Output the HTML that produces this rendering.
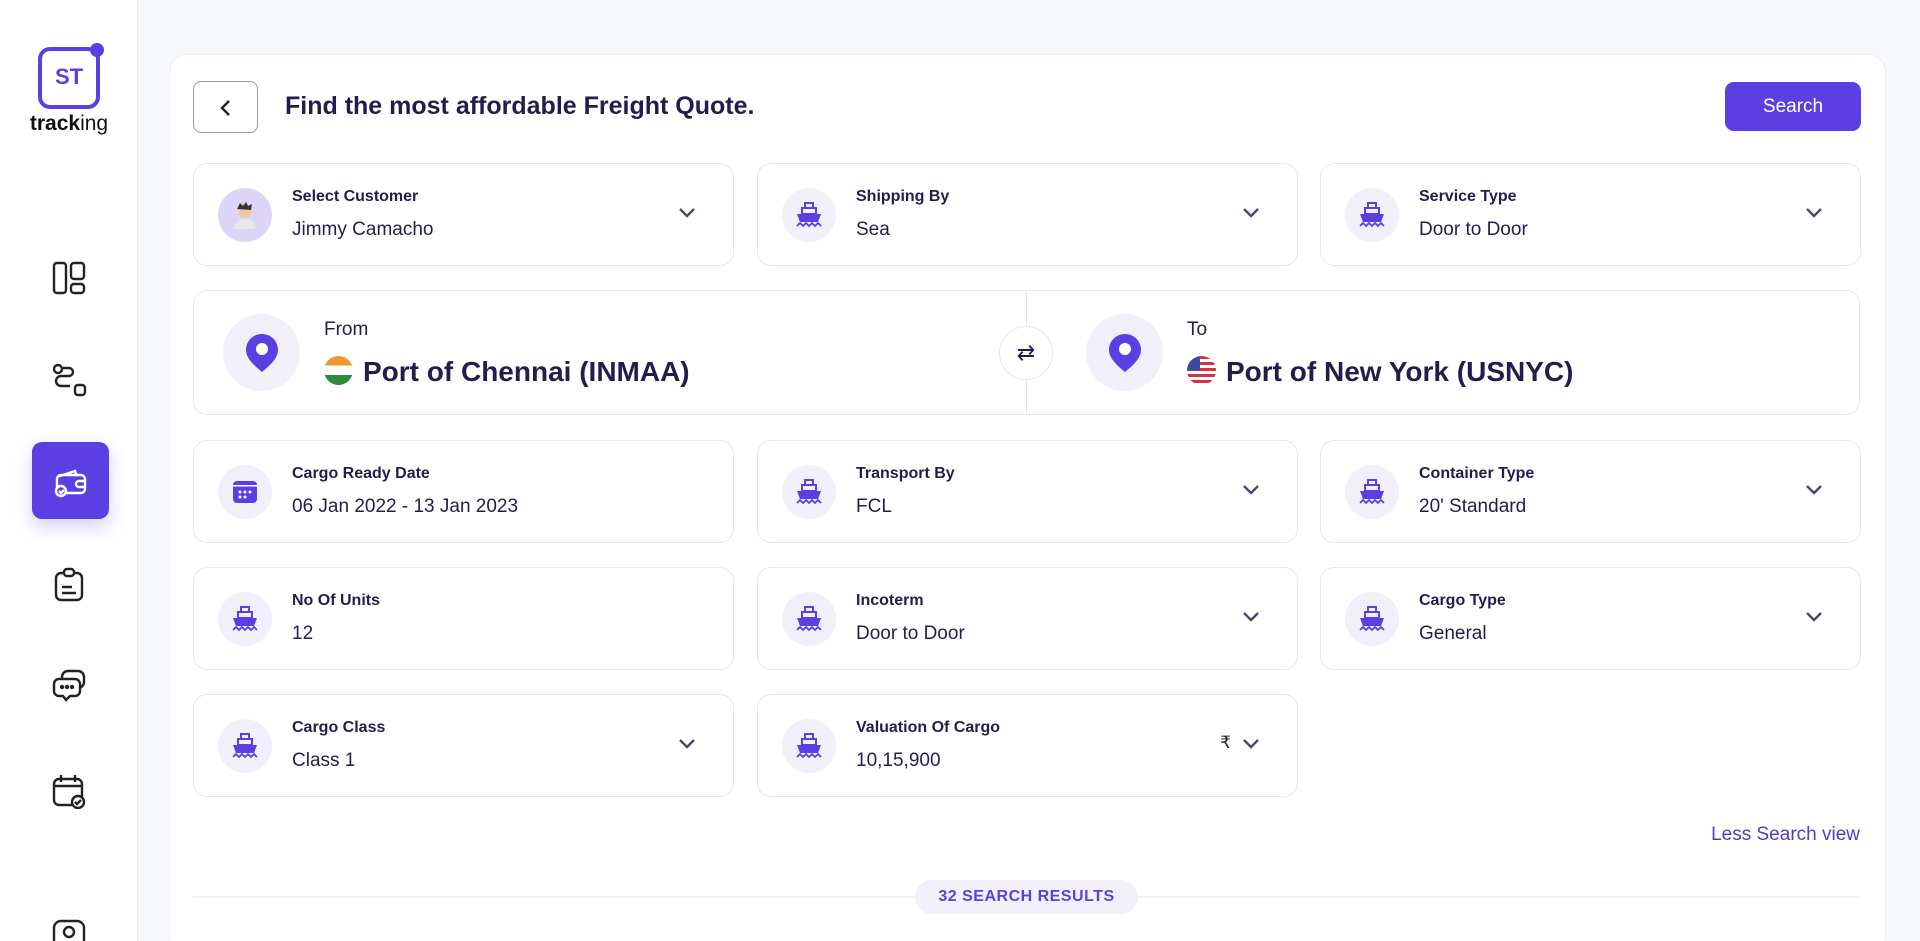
<!DOCTYPE html>
<html><head><meta charset="utf-8"><style>
*{box-sizing:border-box;margin:0;padding:0}
html,body{width:1920px;height:941px;overflow:hidden}
body{background:#f7f8fb;font-family:"Liberation Sans",sans-serif;color:#231d4d;position:relative}
.side{position:absolute;left:0;top:0;width:138px;height:941px;background:#fff;border-right:1px solid #eceef3}
.logo{position:absolute;left:38px;top:47px;width:62px;height:62px;border:4px solid #5b3fe3;border-radius:12px;color:#5b3fe3;font-weight:700;font-size:22px;text-align:center;line-height:52px}
.logo:after{content:"";position:absolute;right:-8px;top:-8px;width:14px;height:14px;border-radius:50%;background:#5b3fe3}
.trk{position:absolute;left:0;width:138px;top:112px;text-align:center;font-size:21px;color:#111;font-weight:700}
.si{position:absolute;left:51px;width:36px;height:36px}
.act{position:absolute;left:32px;top:442px;width:77px;height:77px;border-radius:10px;background:#5b3fe3;box-shadow:0 8px 18px rgba(91,63,227,.25)}
.card{position:absolute;left:169px;top:54px;width:1717px;height:900px;background:#fff;border:1px solid #eceef3;border-radius:18px}
.back{position:absolute;left:193px;top:81px;width:65px;height:52px;border:1.5px solid #9a9aa6;border-radius:8px;background:#fff}
.title{position:absolute;left:285px;top:92px;font-size:25px;font-weight:700;color:#231d4d}
.btn{position:absolute;left:1725px;top:82px;width:136px;height:49px;border-radius:9px;background:#5b3fe3;color:#fff;font-size:19px;text-align:center;line-height:49px}
.f{position:absolute;width:541px;height:103px;border:1px solid #e6e7ec;border-radius:14px;background:#fff}
.ic{position:absolute;left:24px;top:24px;width:54px;height:54px;border-radius:50%;background:#f1f0fa}
.ic svg{position:absolute;left:13px;top:13px}
.lb{position:absolute;left:98px;top:24px;font-size:16px;font-weight:700;color:#231d4d}
.vl{position:absolute;left:98px;top:55px;font-size:19px;color:#231d4d}
.chev{position:absolute;right:36px;top:42px}
.ft{position:absolute;left:193px;top:290px;width:1667px;height:125px;border:1px solid #e6e7ec;border-radius:14px;background:#fff}
.pin{position:absolute;top:23px;width:77px;height:77px;border-radius:50%;background:#f1f0fa}
.pin svg{position:absolute;left:22px;top:19px}
.fl{position:absolute;top:28px;font-size:19px}
.port{position:absolute;top:65px;font-size:28px;font-weight:700;white-space:nowrap}
.flag{display:inline-block;width:29px;height:29px;border-radius:50%;vertical-align:-4px;margin-right:10px;overflow:hidden}
.sw{position:absolute;left:805px;top:35px;width:54px;height:54px;border-radius:50%;border:1px solid #e6e7ec;background:#fff;text-align:center;line-height:52px;font-size:22px}
.div{position:absolute;left:832px;top:0;width:1px;height:123px;background:#e6e7ec}
.less{position:absolute;right:60px;top:824px;font-size:19px;color:#4f3bc9}
.line{position:absolute;left:193px;top:896px;width:1667px;height:2px;background:#f0f1f4}
.pill{position:absolute;left:915px;top:880px;width:223px;height:34px;border-radius:17px;background:#f1f0fb;color:#5b3fe3;font-size:16px;font-weight:700;text-align:center;line-height:34px;letter-spacing:.5px}
</style></head><body>
<div class="side">
<div class="logo">ST</div>
<div class="trk">track<span style="font-weight:400">ing</span></div>
<svg class="si" style="top:260px" viewBox="0 0 36 36" fill="none" stroke="#222" stroke-width="2.4"><rect x="3" y="3" width="12" height="30" rx="3"/><rect x="20" y="3" width="13" height="16" rx="3"/><rect x="20" y="24" width="13" height="9" rx="3"/></svg>
<svg class="si" style="top:362px" viewBox="0 0 36 36" fill="none" stroke="#222" stroke-width="2.4"><circle cx="7" cy="7" r="4"/><rect x="24" y="23" width="10" height="10" rx="3"/><path d="M12 6h6a4 4 0 0 1 0 8h-8a5 5 0 0 0 0 10h9"/></svg>
<div class="act"></div>
<svg class="si" style="left:53px;top:463px" viewBox="0 0 36 36" fill="none" stroke="#fff" stroke-width="2.4"><path d="M4 14l18-6 2 5"/><rect x="4" y="12" width="28" height="18" rx="4"/><path d="M32 18h-6a3 3 0 0 0 0 6h6"/><circle cx="8" cy="28" r="5" fill="#5b3fe3"/><path d="M6 28l2 2 3-3"/></svg>
<svg class="si" style="top:567px" viewBox="0 0 36 36" fill="none" stroke="#222" stroke-width="2.4"><rect x="5" y="6" width="26" height="27" rx="5"/><rect x="13" y="2" width="10" height="7" rx="3" fill="#fff"/><path d="M11 20h10M11 26h14"/></svg>
<svg class="si" style="top:668px" viewBox="0 0 36 36" fill="none" stroke="#222" stroke-width="2.4"><rect x="11" y="3" width="22" height="17" rx="6"/><path d="M8 11h16a5 5 0 0 1 5 5v7a5 5 0 0 1-5 5H19l-4 4-3-4H8a5 5 0 0 1-5-5v-7a5 5 0 0 1 5-5z" fill="#fff"/><circle cx="11" cy="19" r="1" fill="#222"/><circle cx="16" cy="19" r="1" fill="#222"/><circle cx="21" cy="19" r="1" fill="#222"/></svg>
<svg class="si" style="top:773px" viewBox="0 0 36 36" fill="none" stroke="#222" stroke-width="2.4"><rect x="3" y="6" width="28" height="26" rx="5"/><path d="M10 2v7M24 2v7M3 13h28"/><circle cx="27" cy="29" r="6" fill="#fff"/><path d="M24 29l2 2 4-4"/></svg>
<svg class="si" style="top:918px" viewBox="0 0 36 36" fill="none" stroke="#222" stroke-width="2.4"><rect x="3" y="3" width="30" height="30" rx="7"/><circle cx="18" cy="14" r="5"/></svg>
</div>
<div class="card"></div>
<div class="back"><svg style="position:absolute;left:25px;top:17px" width="14" height="18" viewBox="0 0 14 18" fill="none" stroke="#222" stroke-width="2.4"><path d="M10 2L3 9l7 7"/></svg></div>
<div class="title">Find the most affordable Freight Quote.</div>
<div class="btn">Search</div>

<div class="f" style="left:193px;top:163px"><div class="ic" style="background:#ddd5f7"><svg width="28" height="28" viewBox="0 0 28 28"><circle cx="14" cy="10" r="7" fill="#f1c9a5"/><path d="M6 8l3-6 3 3 3-4 2 4 4-2-1 6z" fill="#333"/><path d="M3 28c1-8 6-10 11-10s10 2 11 10z" fill="#e8e8ea"/></svg></div><div class="lb">Select Customer</div><div class="vl">Jimmy Camacho</div>
<svg class="chev" width="20" height="14" viewBox="0 0 20 14" fill="none" stroke="#4b4870" stroke-width="2.4"><path d="M3 3l7 7 7-7"/></svg></div>

<div class="f" style="left:757px;top:163px"><div class="ic"><svg width="28" height="28" viewBox="0 0 28 28"><rect x="10" y="2" width="8" height="5" fill="none" stroke="#5b3fe3" stroke-width="2"/><rect x="7" y="7" width="14" height="6" fill="none" stroke="#5b3fe3" stroke-width="2"/><path d="M2 13h24l-3 8H5z" fill="#5b3fe3"/><path d="M2 25l3-3 3 3 3-3 3 3 3-3 3 3 3-3 3 3" fill="none" stroke="#5b3fe3" stroke-width="1.8"/></svg></div><div class="lb">Shipping By</div><div class="vl">Sea</div>
<svg class="chev" width="20" height="14" viewBox="0 0 20 14" fill="none" stroke="#4b4870" stroke-width="2.4"><path d="M3 3l7 7 7-7"/></svg></div>

<div class="f" style="left:1320px;top:163px"><div class="ic"><svg width="28" height="28" viewBox="0 0 28 28"><rect x="10" y="2" width="8" height="5" fill="none" stroke="#5b3fe3" stroke-width="2"/><rect x="7" y="7" width="14" height="6" fill="none" stroke="#5b3fe3" stroke-width="2"/><path d="M2 13h24l-3 8H5z" fill="#5b3fe3"/><path d="M2 25l3-3 3 3 3-3 3 3 3-3 3 3 3-3 3 3" fill="none" stroke="#5b3fe3" stroke-width="1.8"/></svg></div><div class="lb">Service Type</div><div class="vl">Door to Door</div>
<svg class="chev" width="20" height="14" viewBox="0 0 20 14" fill="none" stroke="#4b4870" stroke-width="2.4"><path d="M3 3l7 7 7-7"/></svg></div>

<div class="ft">
<div class="pin" style="left:29px"><svg width="34" height="40" viewBox="0 0 34 40"><path d="M17 1C8 1 1 8 1 17c0 9 10 17 16 22 6-5 16-13 16-22C33 8 26 1 17 1z" fill="#5b3fe3"/><circle cx="17" cy="16" r="6" fill="#fff"/></svg></div>
<div class="fl" style="left:130px">From</div>
<div class="port" style="left:130px"><span class="flag" style="background:linear-gradient(#f4962f 33%,#fff 33%,#fff 66%,#2f8a3a 66%)"></span>Port of Chennai (INMAA)</div>
<div class="div"></div>
<div class="sw">⇄</div>
<div class="pin" style="left:892px"><svg width="34" height="40" viewBox="0 0 34 40"><path d="M17 1C8 1 1 8 1 17c0 9 10 17 16 22 6-5 16-13 16-22C33 8 26 1 17 1z" fill="#5b3fe3"/><circle cx="17" cy="16" r="6" fill="#fff"/></svg></div>
<div class="fl" style="left:993px">To</div>
<div class="port" style="left:993px"><span class="flag" style="background:linear-gradient(90deg,#3b4a9b 45%,transparent 45%) 0 0/100% 50% no-repeat,repeating-linear-gradient(#d8323a 0 3px,#fff 3px 6px)"></span>Port of New York (USNYC)</div>
</div>

<div class="f" style="left:193px;top:440px"><div class="ic"><svg width="28" height="28" viewBox="0 0 28 28"><rect x="2" y="3" width="24" height="22" rx="4" fill="#5b3fe3"/><rect x="2" y="7" width="24" height="1.5" fill="#fff"/><g fill="#fff"><circle cx="9" cy="14" r="1.5"/><circle cx="14" cy="14" r="1.5"/><circle cx="19" cy="14" r="1.5"/><circle cx="9" cy="19" r="1.5"/><circle cx="14" cy="19" r="1.5"/></g></svg></div><div class="lb">Cargo Ready Date</div><div class="vl">06 Jan 2022 - 13 Jan 2023</div></div>

<div class="f" style="left:757px;top:440px"><div class="ic"><svg width="28" height="28" viewBox="0 0 28 28"><rect x="10" y="2" width="8" height="5" fill="none" stroke="#5b3fe3" stroke-width="2"/><rect x="7" y="7" width="14" height="6" fill="none" stroke="#5b3fe3" stroke-width="2"/><path d="M2 13h24l-3 8H5z" fill="#5b3fe3"/><path d="M2 25l3-3 3 3 3-3 3 3 3-3 3 3 3-3 3 3" fill="none" stroke="#5b3fe3" stroke-width="1.8"/></svg></div><div class="lb">Transport By</div><div class="vl">FCL</div>
<svg class="chev" width="20" height="14" viewBox="0 0 20 14" fill="none" stroke="#4b4870" stroke-width="2.4"><path d="M3 3l7 7 7-7"/></svg></div>

<div class="f" style="left:1320px;top:440px"><div class="ic"><svg width="28" height="28" viewBox="0 0 28 28"><rect x="10" y="2" width="8" height="5" fill="none" stroke="#5b3fe3" stroke-width="2"/><rect x="7" y="7" width="14" height="6" fill="none" stroke="#5b3fe3" stroke-width="2"/><path d="M2 13h24l-3 8H5z" fill="#5b3fe3"/><path d="M2 25l3-3 3 3 3-3 3 3 3-3 3 3 3-3 3 3" fill="none" stroke="#5b3fe3" stroke-width="1.8"/></svg></div><div class="lb">Container Type</div><div class="vl">20' Standard</div>
<svg class="chev" width="20" height="14" viewBox="0 0 20 14" fill="none" stroke="#4b4870" stroke-width="2.4"><path d="M3 3l7 7 7-7"/></svg></div>

<div class="f" style="left:193px;top:567px"><div class="ic"><svg width="28" height="28" viewBox="0 0 28 28"><rect x="10" y="2" width="8" height="5" fill="none" stroke="#5b3fe3" stroke-width="2"/><rect x="7" y="7" width="14" height="6" fill="none" stroke="#5b3fe3" stroke-width="2"/><path d="M2 13h24l-3 8H5z" fill="#5b3fe3"/><path d="M2 25l3-3 3 3 3-3 3 3 3-3 3 3 3-3 3 3" fill="none" stroke="#5b3fe3" stroke-width="1.8"/></svg></div><div class="lb">No Of Units</div><div class="vl">12</div></div>

<div class="f" style="left:757px;top:567px"><div class="ic"><svg width="28" height="28" viewBox="0 0 28 28"><rect x="10" y="2" width="8" height="5" fill="none" stroke="#5b3fe3" stroke-width="2"/><rect x="7" y="7" width="14" height="6" fill="none" stroke="#5b3fe3" stroke-width="2"/><path d="M2 13h24l-3 8H5z" fill="#5b3fe3"/><path d="M2 25l3-3 3 3 3-3 3 3 3-3 3 3 3-3 3 3" fill="none" stroke="#5b3fe3" stroke-width="1.8"/></svg></div><div class="lb">Incoterm</div><div class="vl">Door to Door</div>
<svg class="chev" width="20" height="14" viewBox="0 0 20 14" fill="none" stroke="#4b4870" stroke-width="2.4"><path d="M3 3l7 7 7-7"/></svg></div>

<div class="f" style="left:1320px;top:567px"><div class="ic"><svg width="28" height="28" viewBox="0 0 28 28"><rect x="10" y="2" width="8" height="5" fill="none" stroke="#5b3fe3" stroke-width="2"/><rect x="7" y="7" width="14" height="6" fill="none" stroke="#5b3fe3" stroke-width="2"/><path d="M2 13h24l-3 8H5z" fill="#5b3fe3"/><path d="M2 25l3-3 3 3 3-3 3 3 3-3 3 3 3-3 3 3" fill="none" stroke="#5b3fe3" stroke-width="1.8"/></svg></div><div class="lb">Cargo Type</div><div class="vl">General</div>
<svg class="chev" width="20" height="14" viewBox="0 0 20 14" fill="none" stroke="#4b4870" stroke-width="2.4"><path d="M3 3l7 7 7-7"/></svg></div>

<div class="f" style="left:193px;top:694px"><div class="ic"><svg width="28" height="28" viewBox="0 0 28 28"><rect x="10" y="2" width="8" height="5" fill="none" stroke="#5b3fe3" stroke-width="2"/><rect x="7" y="7" width="14" height="6" fill="none" stroke="#5b3fe3" stroke-width="2"/><path d="M2 13h24l-3 8H5z" fill="#5b3fe3"/><path d="M2 25l3-3 3 3 3-3 3 3 3-3 3 3 3-3 3 3" fill="none" stroke="#5b3fe3" stroke-width="1.8"/></svg></div><div class="lb">Cargo Class</div><div class="vl">Class 1</div>
<svg class="chev" width="20" height="14" viewBox="0 0 20 14" fill="none" stroke="#4b4870" stroke-width="2.4"><path d="M3 3l7 7 7-7"/></svg></div>

<div class="f" style="left:757px;top:694px"><div class="ic"><svg width="28" height="28" viewBox="0 0 28 28"><rect x="10" y="2" width="8" height="5" fill="none" stroke="#5b3fe3" stroke-width="2"/><rect x="7" y="7" width="14" height="6" fill="none" stroke="#5b3fe3" stroke-width="2"/><path d="M2 13h24l-3 8H5z" fill="#5b3fe3"/><path d="M2 25l3-3 3 3 3-3 3 3 3-3 3 3 3-3 3 3" fill="none" stroke="#5b3fe3" stroke-width="1.8"/></svg></div><div class="lb">Valuation Of Cargo</div><div class="vl">10,15,900</div>
<div style="position:absolute;right:66px;top:38px;font-size:17px;font-family:'DejaVu Sans',sans-serif;color:#222">₹</div>
<svg class="chev" width="20" height="14" viewBox="0 0 20 14" fill="none" stroke="#4b4870" stroke-width="2.4"><path d="M3 3l7 7 7-7"/></svg></div>

<div class="less">Less Search view</div>
<div class="line"></div>
<div class="pill">32 SEARCH RESULTS</div>
</body></html>
